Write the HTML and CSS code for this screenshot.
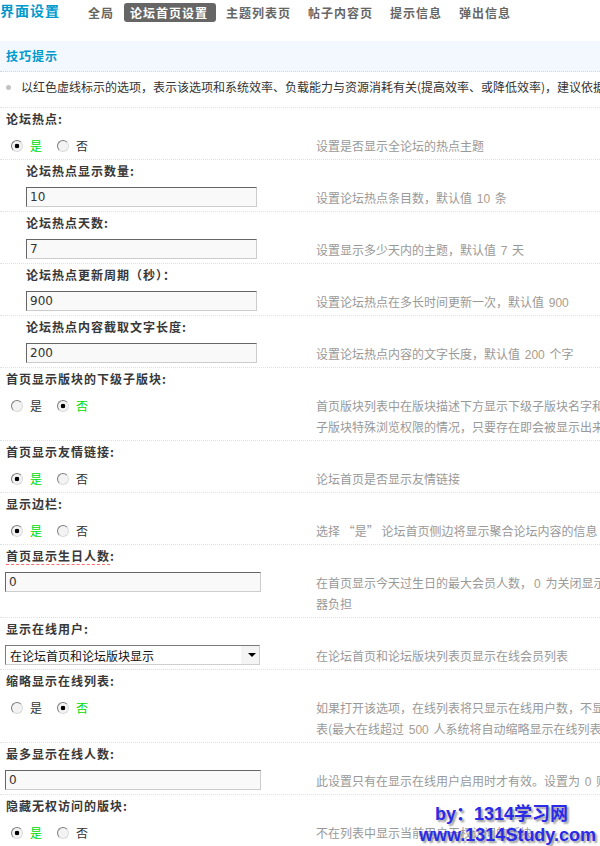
FILE: index.html
```html
<!DOCTYPE html>
<html lang="zh-CN">
<head>
<meta charset="utf-8">
<title>界面设置 - 论坛首页设置</title>
<link rel="stylesheet" href="styles.css">
</head>
<body>
<div class="page">
  <div class="header">
    <h3 class="title">界面设置</h3>
    <ul class="tabs">
      <li class="tab">全局</li>
      <li class="tab on">论坛首页设置</li>
      <li class="tab">主题列表页</li>
      <li class="tab wide">帖子内容页</li>
      <li class="tab wide">提示信息</li>
      <li class="tab wide">弹出信息</li>
    </ul>
  </div>

  <div class="tips">
    <div class="tips-head">技巧提示</div>
    <div class="tips-body"><span class="dot"></span><span>以红色虚线标示的选项，表示该选项和系统效率、负载能力与资源消耗有关(提高效率、或降低效率)，建议依据自身服务器情况进行调整。</span></div>
  </div>

  <div class="form">
    <div class="group">
      <div class="label">论坛热点:</div>
      <div class="row">
        <div class="radios">
          <label class="opt checked"><input type="radio" name="hot" checked><span>是</span></label>
          <label class="opt"><input type="radio" name="hot"><span>否</span></label>
        </div>
        <div class="desc">设置是否显示全论坛的热点主题</div>
      </div>
    </div>

    <div class="group sub">
      <div class="label">论坛热点显示数量:</div>
      <div class="row">
        <div><input class="text" type="text" value="10"></div>
        <div class="desc">设置论坛热点条目数，默认值 <span class="num">10</span> 条</div>
      </div>
    </div>

    <div class="group sub">
      <div class="label">论坛热点天数:</div>
      <div class="row">
        <div><input class="text" type="text" value="7"></div>
        <div class="desc">设置显示多少天内的主题，默认值 <span class="num">7</span> 天</div>
      </div>
    </div>

    <div class="group sub">
      <div class="label">论坛热点更新周期（秒）：</div>
      <div class="row">
        <div><input class="text" type="text" value="900"></div>
        <div class="desc">设置论坛热点在多长时间更新一次，默认值 <span class="num">900</span></div>
      </div>
    </div>

    <div class="group sub">
      <div class="label">论坛热点内容截取文字长度:</div>
      <div class="row">
        <div><input class="text" type="text" value="200"></div>
        <div class="desc">设置论坛热点内容的文字长度，默认值 <span class="num">200</span> 个字</div>
      </div>
    </div>

    <div class="group">
      <div class="label">首页显示版块的下级子版块:</div>
      <div class="row">
        <div class="radios">
          <label class="opt"><input type="radio" name="subforum"><span>是</span></label>
          <label class="opt checked"><input type="radio" name="subforum" checked><span>否</span></label>
        </div>
        <div class="desc">首页版块列表中在版块描述下方显示下级子版块名字和链接（如果存在的话）。注意：本功能不考虑<br>子版块特殊浏览权限的情况，只要存在即会被显示出来</div>
      </div>
    </div>

    <div class="group">
      <div class="label">首页显示友情链接:</div>
      <div class="row">
        <div class="radios">
          <label class="opt checked"><input type="radio" name="links" checked><span>是</span></label>
          <label class="opt"><input type="radio" name="links"><span>否</span></label>
        </div>
        <div class="desc">论坛首页是否显示友情链接</div>
      </div>
    </div>

    <div class="group">
      <div class="label">显示边栏:</div>
      <div class="row">
        <div class="radios">
          <label class="opt checked"><input type="radio" name="sidebar" checked><span>是</span></label>
          <label class="opt"><input type="radio" name="sidebar"><span>否</span></label>
        </div>
        <div class="desc">选择 “是” 论坛首页侧边将显示聚合论坛内容的信息</div>
      </div>
    </div>

    <div class="group">
      <div class="label"><span class="warn">首页显示生日人数</span>:</div>
      <div class="row">
        <div><input class="text" type="text" value="0"></div>
        <div class="desc">在首页显示今天过生日的最大会员人数，<span class="num">0</span> 为关闭显示今天过生日用户，开启本功能会加重服务<br>器负担</div>
      </div>
    </div>

    <div class="group">
      <div class="label">显示在线用户:</div>
      <div class="row">
        <div class="select-wrap">
          <select class="select">
            <option selected>在论坛首页和论坛版块显示</option>
            <option>仅在论坛首页显示</option>
            <option>不显示</option>
          </select>
        </div>
        <div class="desc">在论坛首页和论坛版块列表页显示在线会员列表</div>
      </div>
    </div>

    <div class="group">
      <div class="label">缩略显示在线列表:</div>
      <div class="row">
        <div class="radios">
          <label class="opt"><input type="radio" name="brief"><span>是</span></label>
          <label class="opt checked"><input type="radio" name="brief" checked><span>否</span></label>
        </div>
        <div class="desc">如果打开该选项，在线列表将只显示在线用户数，不显示用户名，当访问人数较多时建议打开此选项，以减少在线列<br>表(最大在线超过 <span class="num">500</span> 人系统将自动缩略显示在线列表)</div>
      </div>
    </div>

    <div class="group">
      <div class="label">最多显示在线人数:</div>
      <div class="row">
        <div><input class="text" type="text" value="0"></div>
        <div class="desc">此设置只有在显示在线用户启用时才有效。设置为 <span class="num">0</span> 则为不限制</div>
      </div>
    </div>

    <div class="group">
      <div class="label">隐藏无权访问的版块:</div>
      <div class="row">
        <div class="radios">
          <label class="opt checked"><input type="radio" name="hide" checked><span>是</span></label>
          <label class="opt"><input type="radio" name="hide"><span>否</span></label>
        </div>
        <div class="desc">不在列表中显示当前用户无权访问的版块</div>
      </div>
    </div>
  </div>

  <div class="watermark">
    <div class="wm-line wm-by">by：1314学习网</div>
    <div class="wm-line">www.1314Study.com</div>
  </div>
</div>
</body>
</html>
```

FILE: styles.css
```css
html, body {
  margin: 0;
  padding: 0;
  overflow: hidden;
  background: #fff;
}

body {
  font-family: "Noto Sans CJK SC", sans-serif;
  font-size: 12px;
  line-height: 1.5;
  color: #333;
}

.page {
  width: 1100px;
  position: relative;
}

/* header */
.header {
  height: 41px;
  display: flex;
  align-items: flex-start;
}

.title {
  margin: 0;
  font-size: 14px;
  line-height: 20px;
  font-weight: 700;
  letter-spacing: 1px;
  color: #0099cc;
}

.tabs {
  list-style: none;
  margin: 3px 0 0 22px;
  padding: 0;
  display: flex;
  gap: 4px;
}

.tab {
  height: 19px;
  line-height: 19px;
  padding: 0 6px;
  font-weight: 700;
  letter-spacing: 1px;
  color: #666;
  border-radius: 3px;
}

.tab.on {
  background: #666;
  color: #fff;
  padding-right: 8px;
}

.tab.wide {
  margin-left: 1px;
}

/* tips */
.tips-head {
  height: 30px;
  line-height: 30px;
  padding-left: 6px;
  background: #f2f8fd;
  border-bottom: 1px dotted #cdd7df;
  font-weight: 700;
  letter-spacing: 1px;
  color: #0099cc;
}

.tips-body {
  display: flex;
  align-items: center;
  padding: 5px 0 10px 6px;
  line-height: 20px;
  white-space: nowrap;
  color: #333;
}

.dot {
  flex: none;
  width: 5px;
  height: 5px;
  border-radius: 50%;
  background: #c2c2c2;
  margin-right: 10px;
}

/* form groups */
.group {
  border-top: 1px dotted #d6e2ec;
}

.label {
  padding-left: 6px;
  line-height: 22px;
  padding-bottom: 2px;
  font-weight: 700;
  letter-spacing: 1px;
  color: #383838;
}

.sub .label {
  padding-left: 26px;
}

.warn {
  border-bottom: 1px dashed #ff6a6a;
}

.row {
  display: grid;
  grid-template-columns: 310px auto;
  align-items: start;
}

.desc {
  padding: 3px 0 3px 6px;
  line-height: 21px;
  color: #999;
  white-space: nowrap;
}

.num {
  font-family: "Liberation Sans", sans-serif;
  line-height: 1;
  margin: 0 2px;
  color: #a89c8e;
}

/* radios */
.radios {
  height: 27px;
  display: flex;
  align-items: center;
  padding-left: 11px;
}

.opt {
  display: inline-flex;
  align-items: center;
  margin-right: 15px;
  line-height: 16px;
  color: #333;
}

.opt.checked {
  color: #00dd00;
}

.opt input {
  appearance: none;
  -webkit-appearance: none;
  margin: 0 7px 0 0;
  width: 12px;
  height: 12px;
  box-sizing: border-box;
  border-radius: 50%;
  border: 1px solid;
  border-color: #7c7c7c #dadada #dadada #7c7c7c;
  background: #f3f3f3;
}

.opt input:checked {
  background: radial-gradient(circle at center, #000 0, #000 2px, #f3f3f3 2.6px);
}

/* text inputs */
.text {
  display: block;
  margin: 3px 0 4px 5px;
  width: 256px;
  height: 20px;
  box-sizing: border-box;
  border: 1px solid;
  border-color: #666 #ccc #ccc #666;
  background: #f8f9f8;
  padding: 0 3px;
  font-family: "DejaVu Sans", sans-serif;
  font-size: 12px;
  color: #333;
  outline: none;
}

.sub .text {
  margin-left: 26px;
  width: 231px;
}

/* select */
.select-wrap {
  position: relative;
  width: 255px;
  margin: 3px 0 4px 5px;
}

.select {
  display: block;
  appearance: none;
  -webkit-appearance: none;
  width: 255px;
  height: 20px;
  box-sizing: border-box;
  border: 1px solid;
  border-color: #7a7a7a #cfcfcf #cfcfcf #7a7a7a;
  border-radius: 0;
  background: linear-gradient(to right, #fff 235px, #f4f4f4 235px);
  padding: 0 0 0 4px;
  font-family: "Noto Sans CJK SC", sans-serif;
  font-size: 12px;
  color: #111;
  outline: none;
}

.select-wrap::after {
  content: "";
  position: absolute;
  right: 4px;
  top: 8px;
  border-left: 4px solid transparent;
  border-right: 4px solid transparent;
  border-top: 4px solid #000;
}

/* watermark overlay */
.watermark {
  position: absolute;
  left: 419px;
  top: 804px;
  font-family: "Liberation Sans", "Noto Sans CJK SC", sans-serif;
  font-size: 18px;
  line-height: 21px;
  font-weight: 700;
  color: #2a2ae8;
  text-shadow: 2px 2px 2px #9a9a9a;
  white-space: nowrap;
}

.wm-by {
  padding-left: 16px;
}
```
